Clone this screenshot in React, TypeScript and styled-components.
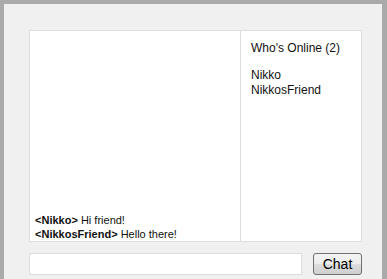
import * as React from 'react';
import styled, { createGlobalStyle } from 'styled-components';

const GlobalStyle = createGlobalStyle`
  html, body {
    margin: 0;
    padding: 0;
    background: #ffffff;
  }
`;

// Styled Components
const Frame = styled.div`
  box-sizing: border-box;
  width: 387px;
  height: 290px;
  border-style: solid;
  border-color: #aaaaaa;
  border-width: 4px 5px 4px 4px;
  background: #f0f0f0;
  padding: 26px 20px 0 25px;
  font-family: 'Liberation Sans', Arial, sans-serif;
  font-size: 12px;
  color: #111;
`;

const Panel = styled.div`
  box-sizing: border-box;
  width: 333px;
  height: 212px;
  border: 1px solid #dddddd;
  background: #ffffff;
  display: grid;
  grid-template-columns: 210px 121px;
`;

const Messages = styled.div`
  display: flex;
  flex-direction: column;
  justify-content: flex-end;
  padding: 0 5px;
  font-size: 11px;
  line-height: 14px;
`;

const Line = styled.div`
  white-space: nowrap;
`;

const Nick = styled.b`
  font-weight: bold;
`;

const Sidebar = styled.div`
  box-sizing: border-box;
  border-left: 1px solid #dddddd;
  padding: 10px 10px;
  line-height: 15px;
`;

const Title = styled.div`
  margin-bottom: 12px;
`;

const InputRow = styled.div`
  display: flex;
  align-items: flex-start;
  margin-top: 11px;
  width: 333px;
  gap: 11px;
`;

const TextBox = styled.input`
  box-sizing: border-box;
  width: 273px;
  height: 22px;
  border: 1px solid #dddddd;
  background: #ffffff;
  padding: 2px 4px;
  outline: none;
  font-family: 'Liberation Sans', Arial, sans-serif;
  font-size: 12px;
`;

const Button = styled.button`
  box-sizing: border-box;
  width: 49px;
  height: 22px;
  padding: 0;
  border: 1px solid #707070;
  border-radius: 3px;
  background: linear-gradient(to bottom, #f4f4f4 0%, #ebebeb 50%, #dddddd 51%, #cfcfcf 100%);
  font-family: 'Liberation Sans', Arial, sans-serif;
  font-size: 14px;
  color: #000;
  cursor: pointer;
`;

// Component
const App = () => {
  const messages = [
    { nick: 'Nikko', text: 'Hi friend!' },
    { nick: 'NikkosFriend', text: 'Hello there!' },
  ];
  const online = ['Nikko', 'NikkosFriend'];

  return (
    <>
      <GlobalStyle />
      <Frame>
        <Panel>
          <Messages>
            {messages.map((m, i) => (
              <Line key={i}>
                <Nick>&lt;{m.nick}&gt;</Nick> {m.text}
              </Line>
            ))}
          </Messages>
          <Sidebar>
            <Title>Who's Online ({online.length})</Title>
            {online.map((name) => (
              <div key={name}>{name}</div>
            ))}
          </Sidebar>
        </Panel>
        <InputRow>
          <TextBox type="text" />
          <Button>Chat</Button>
        </InputRow>
      </Frame>
    </>
  );
};

export default App;
